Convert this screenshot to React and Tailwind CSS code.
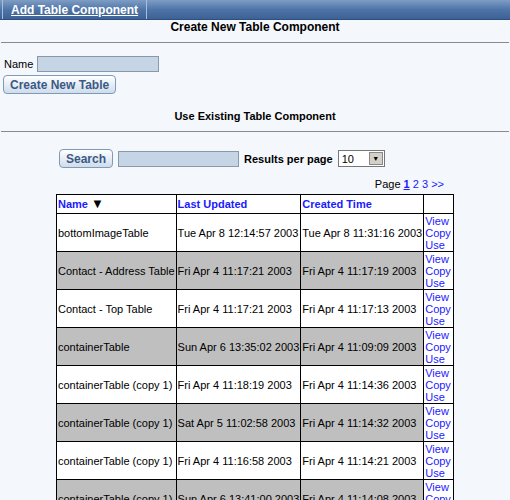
const rows = [
  ['bottomImageTable', 'Tue Apr 8 12:14:57 2003', 'Tue Apr 8 11:31:16 2003'],
  ['Contact - Address Table', 'Fri Apr 4 11:17:21 2003', 'Fri Apr 4 11:17:19 2003'],
  ['Contact - Top Table', 'Fri Apr 4 11:17:21 2003', 'Fri Apr 4 11:17:13 2003'],
  ['containerTable', 'Sun Apr 6 13:35:02 2003', 'Fri Apr 4 11:09:09 2003'],
  ['containerTable (copy 1)', 'Fri Apr 4 11:18:19 2003', 'Fri Apr 4 11:14:36 2003'],
  ['containerTable (copy 1)', 'Sat Apr 5 11:02:58 2003', 'Fri Apr 4 11:14:32 2003'],
  ['containerTable (copy 1)', 'Fri Apr 4 11:16:58 2003', 'Fri Apr 4 11:14:21 2003'],
  ['containerTable (copy 1)', 'Sun Apr 6 13:41:00 2003', 'Fri Apr 4 11:14:08 2003'],
];

export default function App() {
  return (
    <div className="w-[510px] h-[500px] overflow-hidden bg-[#f4f7fb] text-[11px] leading-[14px] text-black" style={{ fontFamily: '"Liberation Sans", Arial, sans-serif' }}>
      <div className="h-[20px] bg-gradient-to-b from-[#7f9dc4] via-[#4f75a8] to-[#3c6295] border-b border-[#2d4f7e] flex items-stretch">
        <div className="ml-[2px] px-[8px] border-l border-r border-[#a9bedb] flex items-center">
          <span className="text-white font-bold underline text-[12px]">Add Table Component</span>
        </div>
      </div>
      <div className="text-center font-bold text-[12px]">Create New Table Component</div>
      <div className="mx-[1px] mt-[8px] border-t border-[#8a8a8a]" />
      <div className="flex items-center gap-[4px] mt-[13px] ml-[4px]">
        <span>Name</span>
        <div className="w-[122px] h-[16px] bg-[#c5d5e5] border border-[#8a98a8]" />
      </div>
      <button className="ml-[3px] mt-[3px] h-[19px] px-[6px] rounded-[4px] border border-[#7f9ab9] bg-gradient-to-b from-[#ffffff] to-[#cfdceb] text-[#3a5a85] font-bold text-[12px]">Create New Table</button>
      <div className="text-center font-bold mt-[15px]">Use Existing Table Component</div>
      <div className="mx-[1px] mt-[8px] border-t border-[#8a8a8a]" />
      <div className="flex items-center gap-[5px] mt-[17px] ml-[59px]">
        <button className="h-[19px] px-[6px] rounded-[4px] border border-[#7f9ab9] bg-gradient-to-b from-[#ffffff] to-[#cfdceb] text-[#3a5a85] font-bold text-[12px]">Search</button>
        <div className="w-[121px] h-[16px] bg-[#c5d5e5] border border-[#8a98a8]" />
        <span className="font-bold">Results per page</span>
        <div className="w-[47px] h-[17px] bg-white border border-[#777] flex items-center justify-between">
          <span className="pl-[3px]">10</span>
          <div className="w-[14px] h-[13px] mr-[1px] bg-[#d4d0c8] border border-[#888] flex items-center justify-center text-[7px]">▼</div>
        </div>
      </div>
      <div className="text-right mr-[66px] mt-[9px]">
        Page <span className="text-[#1a1aff] font-bold underline">1</span> <span className="text-[#1a1aff]">2</span> <span className="text-[#1a1aff]">3</span> <span className="text-[#1a1aff]">&gt;&gt;</span>
      </div>
      <table className="ml-[56px] mt-[3px] border-collapse border border-black whitespace-nowrap">
        <thead>
          <tr className="h-[19px] bg-white">
            <th className="w-[116px] border border-black text-left px-[1px] text-[#1a1aff]">Name <span className="text-black text-[13px]">▼</span></th>
            <th className="w-[123px] border border-black text-left px-[1px] text-[#1a1aff]">Last Updated</th>
            <th className="w-[119px] border border-black text-left px-[1px] text-[#1a1aff]">Created Time</th>
            <th className="w-[30px] border border-black"></th>
          </tr>
        </thead>
        <tbody>
          {rows.map((r, i) => (
            <tr key={i} className={i % 2 ? 'bg-[#bfbfbf] h-[38px]' : 'bg-white h-[38px]'}>
              <td className="border border-black px-[1px]">{r[0]}</td>
              <td className="border border-black px-[1px]">{r[1]}</td>
              <td className="border border-black px-[1px]">{r[2]}</td>
              <td className="border border-black px-[1px] text-[#1a1aff] leading-[12px] bg-white">View<br />Copy<br />Use</td>
            </tr>
          ))}
        </tbody>
      </table>
    </div>
  );
}
